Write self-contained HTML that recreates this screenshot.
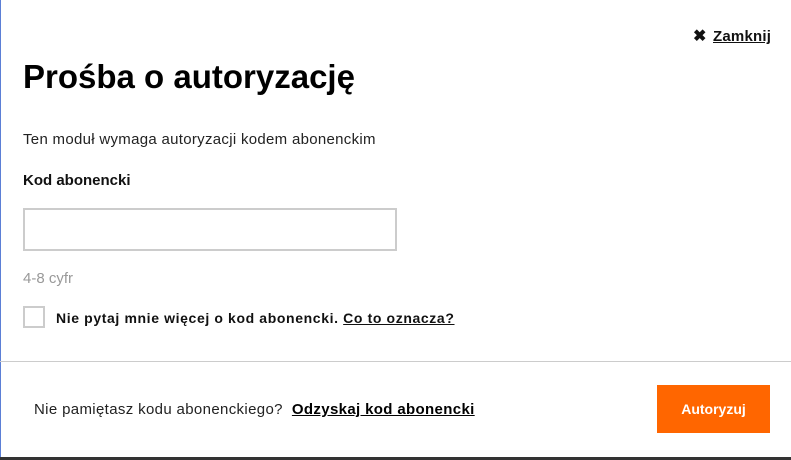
<!DOCTYPE html>
<html><head><meta charset="utf-8"><style>
*{margin:0;padding:0;box-sizing:border-box}
html,body{width:791px;height:460px;overflow:hidden;background:#fff;font-family:"Liberation Sans",Arial,sans-serif;color:#111}
.lb{position:absolute;left:0;top:0;width:1px;height:457px;background:#5b7fd6}
.bb{position:absolute;left:0;top:457px;width:791px;height:3px;background:#333}
.abs{position:absolute;white-space:nowrap}
</style></head><body>
<div class="lb"></div>
<div class="abs" style="left:693px;top:26px;font-size:15px;font-weight:bold;"><span style="display:inline-block;width:14px;font-size:16px;">✖</span><span style="text-decoration:underline;margin-left:6px;letter-spacing:0.2px">Zamknij</span></div>
<div class="abs" style="left:23px;top:58px;font-size:33px;font-weight:bold;color:#000">Prośba o autoryzację</div>
<div class="abs" style="left:23px;top:131px;font-size:15px;color:#222;letter-spacing:0.3px">Ten moduł wymaga autoryzacji kodem abonenckim</div>
<div class="abs" style="left:23px;top:172px;font-size:15px;font-weight:bold">Kod abonencki</div>
<div class="abs" style="left:23px;top:208px;width:374px;height:43px;border:2px solid #ccc"></div>
<div class="abs" style="left:23px;top:270px;font-size:15px;color:#999">4-8 cyfr</div>
<div class="abs" style="left:23px;top:306px;width:22px;height:22px;border:2px solid #ccc"></div>
<div class="abs" style="left:56px;top:310px;font-size:14px;font-weight:bold;letter-spacing:0.62px">Nie pytaj mnie więcej o kod abonencki. <span style="text-decoration:underline">Co to oznacza?</span></div>
<div class="abs" style="left:0;top:361px;width:791px;height:1px;background:#ccc"></div>
<div class="abs" style="left:34px;top:401px;font-size:15px;color:#222;letter-spacing:0.35px">Nie pamiętasz kodu abonenckiego?&nbsp; <b style="text-decoration:underline;color:#000">Odzyskaj kod abonencki</b></div>
<div class="abs" style="left:657px;top:385px;width:113px;height:48px;background:#ff6600;color:#fff;font-size:14px;font-weight:bold;text-align:center;line-height:48px">Autoryzuj</div>
<div class="bb"></div>
</body></html>
